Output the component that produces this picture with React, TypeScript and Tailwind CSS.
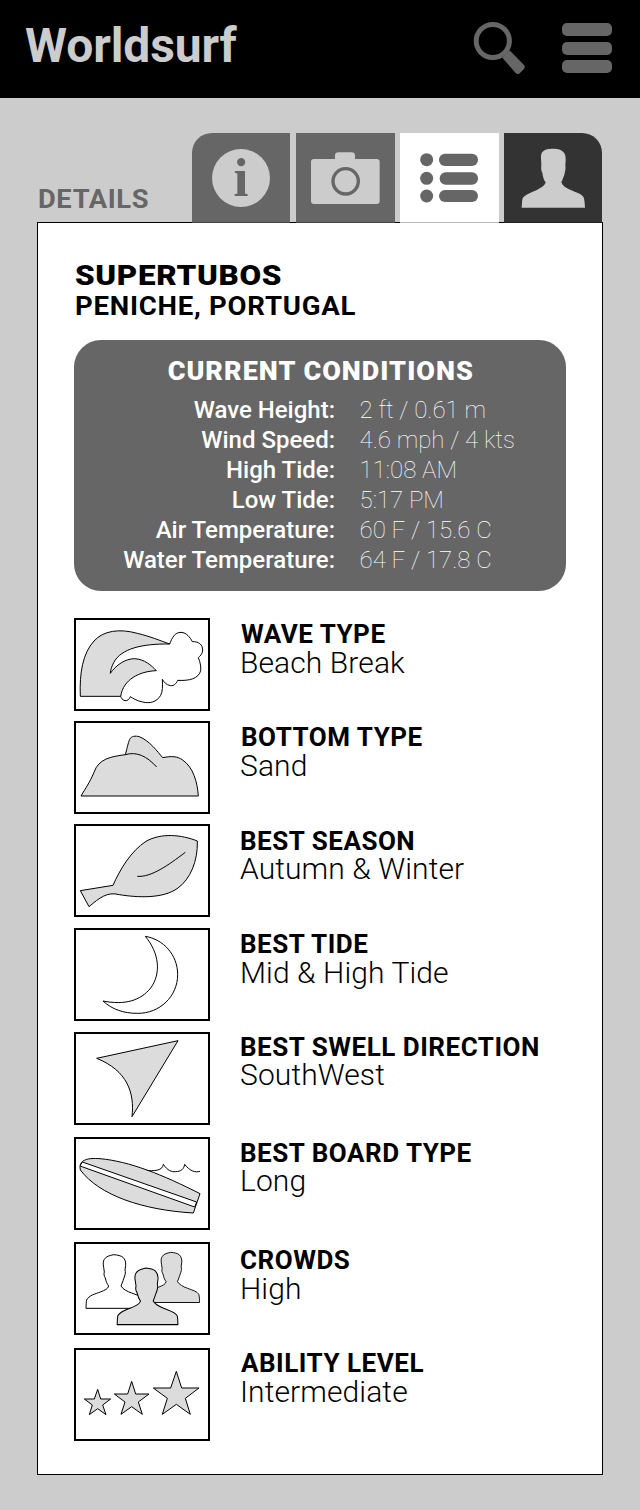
import React from "react";

const HEAD =
  "M457,96 C464,88 474,86 490,86 C506,86 517,90 523,100 C527,106 527,114 527,122 L526,136 C528,146 525,154 523,164 C521,170 518,178 514,187 C518,198 528,204 540,209 C556,216 574,221 580,230 C584,238 584,250 585,263 L395,263 C396,250 396,242 398,235 C404,224 424,217 442,209 C452,204 464,198 467,187 C462,182 459,172 457,158 C453,152 453,144 454,134 L453,116 C453,108 453,100 457,96 Z";

function Bust({ x, y, fill }: { x: number; y: number; fill: string }) {
  return (
    <path
      d="M-32,38 C-34,28 -34,20 -30,14 C-24,4 -14,3 -2,0 C10,1 20,3 26,8 C32,14 35,22 34,32 L32,46 C34,52 33,58 31,64 C28,72 25,82 20,94 C26,104 38,110 52,115 C70,122 86,126 90,136 C92,146 92,152 92,161 L-85,161 C-84,150 -85,142 -83,136 C-76,122 -58,118 -42,112 C-28,106 -20,104 -17,94 C-22,88 -25,80 -27,70 C-31,64 -32,58 -30,52 Z"
      transform={`translate(${x} ${y})`}
      fill={fill}
    />
  );
}

function Illustration({ top, children }: { top: number; children: React.ReactNode }) {
  return (
    <div className="h-[93px] w-[136px] shrink-0 border-2 border-black bg-white">
      <svg
        viewBox={`30 ${top} 396 267`}
        className="block h-[89px] w-[132px]"
        fill="#dcdcdc"
        stroke="#000"
        strokeWidth="3"
        strokeLinejoin="round"
      >
        {children}
      </svg>
    </div>
  );
}

const rows = [
  {
    label: "WAVE TYPE",
    value: "Beach Break",
    row: "",
    text: "pt-[3px]",
    heading: "ml-px",
    art: (
      <Illustration top={30}>
        <path d="M43,259 C40,190 50,130 84,93 C112,62 160,55 214,70 C255,80 280,91 311,102 C230,101 165,115 143,158 C136,172 134,180 133,190 C150,165 178,146 206,146 C236,148 256,166 271,182 C220,184 172,208 164,259 Z" />
        <path
          fill="none"
          d="M311,102 C318,84 326,67 345,67 C362,68 372,82 379,95 C398,94 410,104 410,120 C410,132 402,138 397,143 C404,160 405,172 404,182 C398,206 370,213 335,211 C330,222 324,228 314,227 C300,225 294,216 289,208 C290,228 290,245 284,256 C272,277 250,281 230,276 C212,273 200,264 193,260 C190,268 184,273 177,272 C169,270 166,264 164,259"
        />
      </Illustration>
    ),
  },
  {
    label: "BOTTOM TYPE",
    value: "Sand",
    row: "mt-[10px]",
    text: "pt-[3px]",
    heading: "ml-px",
    art: (
      <Illustration top={339}>
        <path d="M45,558 C60,532 70,520 84,487 C98,446 134,440 178,434 C184,412 186,400 191,388 C196,378 208,377 220,380 C250,392 274,424 290,443 C316,438 334,438 350,450 C382,472 394,516 397,558 Z" />
        <path fill="none" d="M178,434 C212,424 242,438 272,471" />
      </Illustration>
    ),
  },
  {
    label: "BEST SEASON",
    value: "Autumn & Winter",
    row: "mt-[10px]",
    text: "pt-1",
    heading: "-mb-px",
    art: (
      <Illustration top={30}>
        <path d="M43,224 L141,208 C162,160 196,104 240,76 C286,50 346,56 394,75 C396,136 372,190 336,216 C290,250 210,244 160,236 C124,226 100,246 69,272 Z" />
        <path fill="none" d="M214,181 C256,184 306,148 358,109" />
      </Illustration>
    ),
  },
  {
    label: "BEST TIDE",
    value: "Mid & High Tide",
    row: "mt-[11px]",
    text: "pt-[3px]",
    heading: "",
    art: (
      <Illustration top={342}>
        <path
          fill="#fff"
          d="M238,361 C292,370 335,416 335,476 C335,540 282,593 214,592 C172,592 138,580 111,555 C176,568 224,554 254,516 C286,472 280,412 238,361 Z"
        />
      </Illustration>
    ),
  },
  {
    label: "BEST SWELL DIRECTION",
    value: "SouthWest",
    row: "mt-[11px]",
    text: "pt-[2px]",
    heading: "-mb-px",
    art: (
      <Illustration top={30}>
        <path d="M92,103 L336,50 L198,278 C206,206 184,140 92,103 Z" />
      </Illustration>
    ),
  },
  {
    label: "BEST BOARD TYPE",
    value: "Long",
    row: "mt-[12px]",
    text: "pt-[3px]",
    heading: "-mb-px",
    art: (
      <Illustration top={345}>
        <path
          fill="none"
          d="M236,439 C266,442 290,440 292,421 C304,440 318,444 328,443 C346,443 354,434 356,421 C372,442 388,446 402,442"
        />
        <path d="M43,438 C40,426 44,416 50,412 C64,402 84,403 102,404 C190,412 290,452 402,509 L382,567 C230,558 100,514 43,438 Z" />
        <path fill="#fff" d="M49,414 L392,534 L386,549 L42,426 Z" />
      </Illustration>
    ),
  },
  {
    label: "CROWDS",
    value: "High",
    row: "mt-[12px]",
    text: "pt-[5px]",
    heading: "",
    art: (
      <Illustration top={24}>
        <Bust x={145} y={56} fill="#fff" />
        <g transform="translate(316 49) scale(0.92 0.935)">
          <Bust x={0} y={0} fill="#dcdcdc" />
        </g>
        <g transform="translate(241 96) scale(1.03 1.055)">
          <Bust x={0} y={0} fill="#dcdcdc" />
        </g>
      </Illustration>
    ),
  },
  {
    label: "ABILITY LEVEL",
    value: "Intermediate",
    row: "mt-[13px]",
    text: "pt-[2px]",
    heading: "ml-px",
    art: (
      <Illustration top={343}>
        <polygon points="95,461 104,490 134,490 110,508 120,537 95,519 70,537 79,508 55,490 85,490" />
        <polygon points="197,437 209,475 249,475 217,499 229,536 197,513 165,536 177,499 145,475 185,475" />
        <polygon points="331,407 347,457 399,457 358,488 373,536 331,506 289,536 304,488 262,457 314,457" />
      </Illustration>
    ),
  },
];

const conditions = [
  ["Wave Height:", "2 ft / 0.61 m"],
  ["Wind Speed:", "4.6 mph / 4 kts"],
  ["High Tide:", "11:08 AM"],
  ["Low Tide:", "5:17 PM"],
  ["Air Temperature:", "60 F / 15.6 C"],
  ["Water Temperature:", "64 F / 17.8 C"],
];

function Header() {
  return (
    <header className="flex h-[98px] items-start justify-between bg-black pr-7 pl-[25px]">
      <h1 className="mt-[22px] text-[48px] leading-[48px] font-bold tracking-[-0.1px] text-[#ccc]">
        Worldsurf
      </h1>
      <div className="flex">
        <button aria-label="Search" className="mt-[21px] mr-[36px]">
          <svg viewBox="0 0 53 55" className="block h-[55px] w-[53px]">
            <circle cx="19.8" cy="20" r="16.6" fill="none" stroke="#666" strokeWidth="5" />
            <path
              d="M29.3 36.8 L36.8 29.5 L51 44 Q52.6 46 51 48 L46.5 52.4 Q44.5 53.8 42.6 52 Z"
              fill="#666"
            />
          </svg>
        </button>
        <button aria-label="Menu" className="mt-[23px] flex flex-col gap-[5.5px]">
          <span className="h-[13px] w-[50px] rounded-[5px] bg-[#666]" />
          <span className="h-[13px] w-[50px] rounded-[5px] bg-[#666]" />
          <span className="h-[13px] w-[50px] rounded-[5px] bg-[#666]" />
        </button>
      </div>
    </header>
  );
}

function Tabs() {
  return (
    <div className="flex h-[89px] items-end justify-between pr-px">
      <h2 className="mb-[10px] ml-px origin-left scale-x-[1.05] text-[26px] leading-[26px] font-bold tracking-[0.6px] text-[#666]">
        DETAILS
      </h2>
      <nav className="relative z-10 -mb-px flex h-[90px]">
        <button
          aria-label="Info"
          className="mr-[6px] flex w-[98px] justify-center rounded-tl-[20px] border-b border-[#444] bg-[#666] pt-4"
        >
          <span className="flex h-[58px] w-[58px] items-center justify-center rounded-full bg-[#ccc] font-['Liberation_Serif',serif] text-[54px] leading-[58px] font-bold text-[#666]">
            i
          </span>
        </button>
        <button
          aria-label="Photos"
          className="mr-[5px] flex w-[99px] justify-center border-b border-[#444] bg-[#666]"
        >
          <svg viewBox="348 39 297 267" className="block h-[89px] w-[99px]">
            <path
              d="M402,117 H465 V106 Q465,97 476,97 H514 Q525,97 525,106 V117 H590 Q599,117 599,126 V243 Q599,252 590,252 H402 Q393,252 393,243 V126 Q393,117 402,117 Z"
              fill="#ccc"
            />
            <circle cx="497" cy="184" r="38" fill="none" stroke="#666" strokeWidth="10" />
          </svg>
        </button>
        <button
          aria-label="Details"
          className="mr-[5px] flex w-[99px] justify-center border-b border-[#bbb] bg-white"
        >
          <svg viewBox="30 39 297 267" className="block h-[89px] w-[99px]" fill="#666">
            <circle cx="110" cy="119" r="19.5" />
            <circle cx="110" cy="175" r="19.5" />
            <circle cx="110" cy="228" r="19.5" />
            <rect x="147" y="101" width="117" height="37" rx="18" />
            <rect x="149" y="157" width="115" height="37" rx="18" />
            <rect x="147" y="210" width="117" height="36" rx="18" />
          </svg>
        </button>
        <button
          aria-label="Profile"
          className="flex w-[98px] justify-center rounded-tr-[20px] border-b border-[#222] bg-[#333]"
        >
          <svg viewBox="342 39 294 267" className="block h-[89px] w-[98px]" fill="#ccc">
            <path d={HEAD} />
          </svg>
        </button>
      </nav>
    </div>
  );
}

export default function App() {
  return (
    <div className="h-[1510px] w-[640px] bg-[#ccc] font-['Roboto',sans-serif] text-black">
      <Header />
      <main className="px-[37px] pt-[35px]">
        <Tabs />
        <section className="h-[1253px] border border-black bg-white px-9 pt-[37px]">
          <h3 className="ml-px w-max origin-left scale-x-[1.12] text-[28px] leading-[31px] font-black tracking-[0.6px]">
            SUPERTUBOS
          </h3>
          <p className="ml-px w-max origin-left scale-x-[1.06] text-[26px] leading-[30px] font-bold tracking-[0.7px] whitespace-nowrap">
            PENICHE, PORTUGAL
          </p>
          <div className="mt-[19px] h-[251px] rounded-[27px] bg-[#666] pt-[17px] text-white">
            <h4 className="flex justify-center pl-px text-[25px] leading-[30px] font-black">
              <span className="scale-x-[1.08] tracking-[0.95px]">CURRENT CONDITIONS</span>
            </h4>
            <dl className="mt-2 text-2xl leading-[30px]">
              {conditions.map(([name, value]) => (
                <div key={name} className="flex">
                  <dt className="w-[261px] text-right font-medium">{name}</dt>
                  <dd className="ml-[24.5px] font-thin">{value}</dd>
                </div>
              ))}
            </dl>
          </div>
          <div className="mt-[27px] flex flex-col">
            {rows.map((r) => (
              <div key={r.label} className={`flex h-[93px] gap-[30px] ${r.row}`}>
                {r.art}
                <div className={r.text}>
                  <h5
                    className={`w-max origin-left scale-x-[1.04] text-[25px] leading-[27px] font-bold tracking-[0.5px] ${r.heading}`}
                  >
                    {r.label}
                  </h5>
                  <p className="text-[30px] leading-[30px] font-light tracking-[0.1px]">
                    {r.value}
                  </p>
                </div>
              </div>
            ))}
          </div>
        </section>
      </main>
    </div>
  );
}
